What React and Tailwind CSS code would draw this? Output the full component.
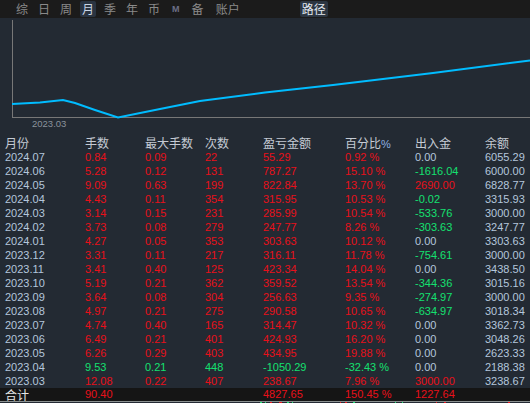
import React from 'react';

const R = 'text-[#e8101a]';
const G = 'text-[#14e070]';
const B = 'text-[#b4c6dc]';

// [月份, 手数, 最大手数, 次数, 盈亏, 百分比, 出入金, 余额, 出入金颜色, 是否亏损]
const rows = [
  ['2024.07', '0.84', '0.09', '22', '55.29', '0.92 %', '0.00', '6055.29', B],
  ['2024.06', '5.28', '0.12', '131', '787.27', '15.10 %', '-1616.04', '6000.00', G],
  ['2024.05', '9.09', '0.63', '199', '822.84', '13.70 %', '2690.00', '6828.77', R],
  ['2024.04', '4.43', '0.11', '354', '315.95', '10.53 %', '-0.02', '3315.93', G],
  ['2024.03', '3.14', '0.15', '231', '285.99', '10.54 %', '-533.76', '3000.00', G],
  ['2024.02', '3.73', '0.08', '279', '247.77', '8.26 %', '-303.63', '3247.77', G],
  ['2024.01', '4.27', '0.05', '353', '303.63', '10.12 %', '0.00', '3303.63', B],
  ['2023.12', '3.31', '0.11', '217', '316.11', '11.78 %', '-754.61', '3000.00', G],
  ['2023.11', '3.41', '0.40', '125', '423.34', '14.04 %', '0.00', '3438.50', B],
  ['2023.10', '5.19', '0.21', '362', '359.52', '13.54 %', '-344.36', '3015.16', G],
  ['2023.09', '3.64', '0.08', '304', '256.63', '9.35 %', '-274.97', '3000.00', G],
  ['2023.08', '4.97', '0.21', '275', '290.58', '10.65 %', '-634.97', '3018.34', G],
  ['2023.07', '4.74', '0.40', '165', '314.47', '10.32 %', '0.00', '3362.73', B],
  ['2023.06', '6.49', '0.21', '401', '424.93', '16.20 %', '0.00', '3048.26', B],
  ['2023.05', '6.26', '0.29', '403', '434.95', '19.88 %', '0.00', '2623.33', B],
  ['2023.04', '9.53', '0.21', '448', '-1050.29', '-32.43 %', '0.00', '2188.38', B, true],
  ['2023.03', '12.08', '0.22', '407', '238.67', '7.96 %', '3000.00', '3238.67', R],
];

const cols = 'grid grid-cols-[80px_60px_60px_58px_82px_70px_70px_1fr] pl-[5px]';
const cjk = { fontFamily: '"Noto Sans CJK SC", "Noto Sans", sans-serif' };

const TopBar = () => {
  const item = 'h-[16px] leading-[16px] px-[2px] text-[12px]';
  return (
    <div className="h-[18px] bg-[#1b1b1b] flex items-center pl-[14px] text-[#8a8a8a]" style={cjk}>
      {['综', '日', '周'].map(t => (
        <span key={t} className={`${item} mr-[6px]`}>{t}</span>
      ))}
      <span className={`${item} mr-[6px] bg-[#2a3441] text-[#c9d5e4] rounded-[2px]`}>月</span>
      {['季', '年', '币'].map(t => (
        <span key={t} className={`${item} mr-[6px]`}>{t}</span>
      ))}
      <span
        className="ml-[4px] mr-[8px] text-[9px] font-bold text-[#6b6f86] leading-[16px]"
        style={{ fontFamily: '"Liberation Sans", Arial, sans-serif' }}
      >
        M
      </span>
      <span className={`${item} ml-[2px] mr-[6px]`}>备</span>
      <span className={`${item} ml-[2px]`}>账户</span>
      <span className={`${item} ml-[58px] bg-[#2c3642] text-[#e2e8f0] rounded-[2px]`}>路径</span>
    </div>
  );
};

const Chart = () => (
  <div className="h-[118px]">
    <svg width="530" height="118" className="block">
      <line x1="12.5" y1="2" x2="12.5" y2="99.5" stroke="#777" strokeWidth="1" />
      <line x1="12" y1="99.5" x2="530" y2="99.5" stroke="#777" strokeWidth="1" />
      <polyline
        points="12,86 40,84.5 63,82 75,85 95,92 118,99.5 160,91 200,83 265,74.5 333,67 433,55 530,42.5"
        fill="none"
        stroke="#00bcff"
        strokeWidth="2"
      />
      <text
        x="32"
        y="109"
        fontSize="9.5"
        fill="#8a929c"
        fontFamily='"Liberation Sans", Arial, sans-serif'
      >
        2023.03
      </text>
    </svg>
  </div>
);

const App = () => {
  return (
    <div className="w-[530px] h-[403px] overflow-hidden bg-[#232a33]">
      <TopBar />
      <Chart />

      {/* 表头 */}
      <div className={`${cols} h-[14px] leading-[14px] text-[12px] text-[#c5cbd4]`} style={cjk}>
        <span>月份</span>
        <span>手数</span>
        <span>最大手数</span>
        <span>次数</span>
        <span>盈亏金额</span>
        <span>
          百分比
          <span
            className="text-[#8fb0e0] text-[11px]"
            style={{ fontFamily: '"Liberation Sans", Arial, sans-serif' }}
          >
            %
          </span>
        </span>
        <span>出入金</span>
        <span>余额</span>
      </div>

      <div style={{ fontFamily: '"Liberation Sans", Arial, sans-serif' }} className="text-[11px]">
        {rows.map(r => {
          const c = r[9] ? G : R;
          return (
            <div key={r[0]} className={`${cols} h-[14px] leading-[14px]`}>
              <span className={B}>{r[0]}</span>
              <span className={c}>{r[1]}</span>
              <span className={c}>{r[2]}</span>
              <span className={c}>{r[3]}</span>
              <span className={c}>{r[4]}</span>
              <span className={c}>{r[5]}</span>
              <span className={r[8]}>{r[6]}</span>
              <span className={B}>{r[7]}</span>
            </div>
          );
        })}

        {/* 合计 */}
        <div className={`${cols} items-center h-[13px] leading-[13px] bg-[#151515]`}>
          <span className="text-[#e6e6e6] text-[12px] leading-[13px]" style={cjk}>合计</span>
          <span className={R}>90.40</span>
          <span />
          <span />
          <span className={R}>4827.65</span>
          <span className={R}>150.45 %</span>
          <span className={R}>1227.64</span>
          <span />
        </div>
      </div>

      <div className="h-px bg-[#8a9090]" />
      <svg width="530" height="2" className="block">
        <rect x="260" y="0" width="2" height="2" fill="#14e070" />
        <rect x="265" y="0" width="1" height="2" fill="#14e070" />
        <rect x="270" y="0" width="2" height="2" fill="#e8101a" />
        <rect x="279" y="0" width="3" height="2" fill="#e8101a" />
        <rect x="287" y="0" width="2" height="2" fill="#14e070" />
        <rect x="292" y="0" width="1" height="2" fill="#14e070" />
        <rect x="340" y="0" width="1" height="2" fill="#e8101a" />
        <rect x="345" y="0" width="2" height="2" fill="#e8101a" />
        <rect x="353" y="0" width="2" height="2" fill="#14e070" />
        <rect x="395" y="0" width="1" height="2" fill="#14e070" />
        <rect x="402" y="0" width="1" height="2" fill="#14e070" />
        <rect x="436" y="0" width="1" height="2" fill="#e8101a" />
        <rect x="444" y="0" width="2" height="2" fill="#e8101a" />
        <rect x="508" y="0" width="2" height="2" fill="#e8101a" />
      </svg>
    </div>
  );
};

export default App;
